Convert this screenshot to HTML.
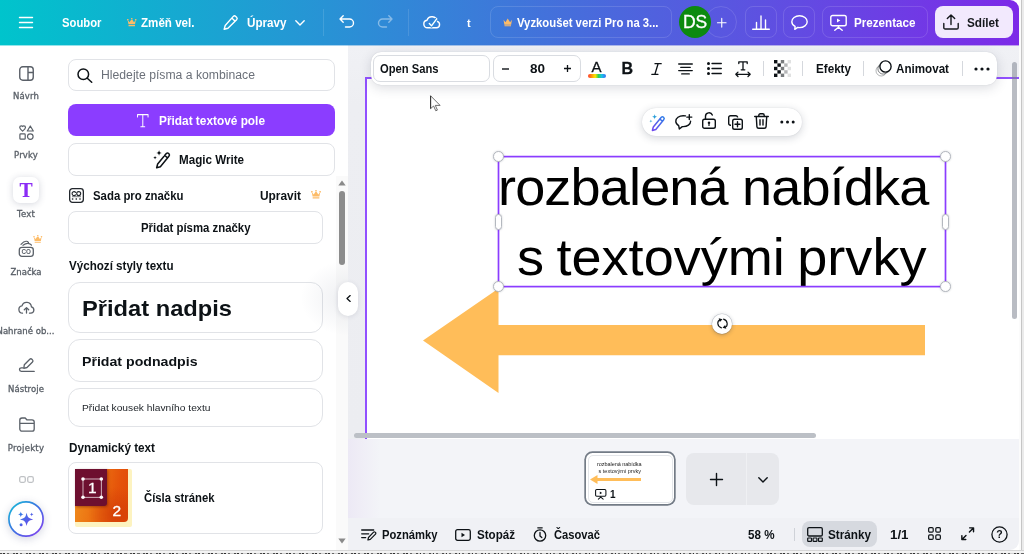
<!DOCTYPE html>
<html lang="cs">
<head>
<meta charset="utf-8">
<title>Canva</title>
<style>
*{box-sizing:border-box;margin:0;padding:0}
html,body{width:1024px;height:554px;overflow:hidden;background:#fff}
body{font-family:"Liberation Sans",sans-serif;color:#0d1216;position:relative}
.abs{position:absolute}
#win{will-change:transform;position:absolute;left:0;top:0;width:1019px;height:550px;overflow:hidden;border-radius:0 9px 9px 0;background:#fff}
#outer-r{position:absolute;left:1019px;top:0;width:5px;height:554px;background:linear-gradient(90deg,#fbfbfb 0,#fbfbfb 2.5px,#c6c6c6 2.5px,#c6c6c6 3.5px,#ebebeb 3.5px)}
#outer-r i{display:none}
#outer-b{position:absolute;left:0;top:550px;width:1024px;height:4px;background:linear-gradient(180deg,#d4d4d4 0,#d8d8d8 1.2px,#f3f3f3 1.2px,#f3f3f3 2.6px,rgba(243,243,243,0) 2.6px),repeating-linear-gradient(90deg,#4a4a4a 0,#4a4a4a 2px,#c8c8c8 2px,#c8c8c8 3.5px,#2e2e2e 3.5px,#2e2e2e 5px,#e2e2e2 5px,#e2e2e2 7px,#666 7px,#666 9.5px,#d0d0d0 9.5px,#d0d0d0 13px)}
/* header */
#hdr{position:absolute;left:0;top:0;width:1019px;height:45px;background:linear-gradient(90deg,#00c4cc 0%,#7d2ae8 100%)}
#hdr .t{position:absolute;color:#fff;font-weight:700;font-size:12px;line-height:16px;top:14.600px;white-space:nowrap}
#hdr .vd{position:absolute;top:9px;width:1px;height:27px;background:rgba(255,255,255,.12)}
#hdr .ob{position:absolute;top:6px;height:32px;border:1px solid rgba(255,255,255,.13);border-radius:8px}
/* rail */
#rail{position:absolute;left:0;top:45px;width:52px;height:505px;background:#fff;z-index:2}
#rail .lb{position:absolute;left:-10px;width:72px;text-align:center;font-family:'DejaVu Sans','Liberation Sans',sans-serif;font-size:8.5px;line-height:12px;color:#5a6068;font-weight:400;-webkit-text-stroke:.3px;white-space:nowrap}
#rail svg{position:absolute}
/* panel */
#panel{position:absolute;left:52px;top:45px;width:296px;height:505px;background:#fff}
.card{position:absolute;border:1px solid #e1e3e7;border-radius:8px;background:#fff}
.ptxt{position:absolute;white-space:nowrap;font-weight:700;color:#0d1216}
/* canvas */
#cv{position:absolute;left:348px;top:45px;width:671px;height:394px;background:linear-gradient(180deg,#f0f1f5 0,#edeef2 60px,#ecedf1 100%)}
#page{position:absolute;left:365px;top:77px;width:660px;height:362px;background:#fff;border-left:2px solid #9150ff;border-top:2px solid #9150ff}
#tray{position:absolute;left:348px;top:439px;width:671px;height:79px;background:linear-gradient(90deg,#ece9f5 0,#efedf6 12px,#f3f4f8 32px)}
#bbar{position:absolute;left:348px;top:518px;width:671px;height:32px;background:#f0f1f5}
#bbar .t{position:absolute;top:9.500px;font-size:12px;line-height:14px;font-weight:700;color:#0d1216;white-space:nowrap}
/* toolbar */
#tb{position:absolute;left:371px;top:52px;width:626px;height:32.500px;background:#fff;border-radius:10px;box-shadow:0 3px 12px rgba(40,50,70,.17),0 0 1px rgba(40,50,70,.2)}
#tb .t{position:absolute;top:9.800px;font-size:12px;line-height:15px;font-weight:700;color:#0d1216;white-space:nowrap}
#tb .vd{position:absolute;top:9px;width:1px;height:15px;background:#d5d8dd}
#mini{position:absolute;left:642px;top:107.700px;width:159.500px;height:28.500px;background:#fff;border-radius:14.250px;box-shadow:0 2px 9px rgba(40,50,70,.2),0 0 1px rgba(40,50,70,.2)}
svg{display:block;overflow:visible}
.ct{font-size:52px;line-height:60px;color:#000;white-space:nowrap}
.hc{position:absolute;width:11px;height:11px;border-radius:6px;background:#fff;border:1px solid #b4b8bf;box-shadow:0 0 2px rgba(40,50,70,.25)}
.hs{position:absolute;width:7px;height:16px;border-radius:3.500px;background:#fff;border:1px solid #b4b8bf;box-shadow:0 0 2px rgba(40,50,70,.25)}
</style>
</head>
<body>
<div id="win">
  <div id="hdr">
    <svg class="abs" style="left:19px;top:16px" width="14" height="13" viewBox="0 0 14 13"><path d="M.5 1.5h13M.5 6.5h13M.5 11.5h13" stroke="#fff" stroke-width="1.4" stroke-linecap="round" fill="none"/></svg>
    <span class="t" style="transform:scaleX(0.9405);transform-origin:0 50%;left:62px">Soubor</span>
    <svg class="abs" style="left:126.500px;top:17.800px" width="9.500" height="8.500" viewBox="0 0 18 16"><path d="M1.300 3.800l3.500 4.300L9 1.600l4.200 6.500 3.500-4.300-1.500 8.200H2.800zM2.900 13.400h12.200v2H2.900zM1.500 1.900a1.500 1.500 0 1 0 .01 0zM9 0a1.500 1.500 0 1 0 .01 0zM16.500 1.900a1.500 1.500 0 1 0 .01 0z" fill="#fdbc68"/></svg>
    <span class="t" style="transform:scaleX(0.9664);transform-origin:0 50%;left:141px">Změň vel.</span>
    <svg class="abs" style="left:223px;top:15px" width="15" height="15" viewBox="0 0 15 15"><path d="M10.300 1.400a1.700 1.700 0 0 1 2.400 0l.9.900a1.700 1.700 0 0 1 0 2.400L5 13.300l-3.800 1 1-3.800zM8.800 2.900l3.300 3.300" stroke="#fff" stroke-width="1.400" fill="none" stroke-linejoin="round" stroke-linecap="round"/></svg>
    <span class="t" style="transform:scaleX(0.9708);transform-origin:0 50%;left:247px">Úpravy</span>
    <svg class="abs" style="left:295px;top:20px" width="10" height="6" viewBox="0 0 10 6"><path d="M.8.800L5 5l4.200-4.200" stroke="#fff" stroke-width="1.400" fill="none" stroke-linecap="round" stroke-linejoin="round"/></svg>
    <i class="vd" style="left:323px"></i>
    <svg class="abs" style="left:339px;top:15px" width="16" height="13" viewBox="0 0 16 13"><path d="M4.200.8L1 4l3.200 3.200M1.200 4h9.300a4 4 0 0 1 0 8H6.500" stroke="#fff" stroke-width="1.400" fill="none" stroke-linecap="round" stroke-linejoin="round"/></svg>
    <svg class="abs" style="left:377px;top:15px;opacity:.42" width="16" height="13" viewBox="0 0 16 13"><path d="M11.800.8L15 4l-3.200 3.200M14.800 4H5.500a4 4 0 0 0 0 8h4" stroke="#fff" stroke-width="1.400" fill="none" stroke-linecap="round" stroke-linejoin="round"/></svg>
    <i class="vd" style="left:408px"></i>
    <svg class="abs" style="left:423px;top:15px" width="18" height="14" viewBox="0 0 18 14"><path d="M4.600 12.800a3.800 3.800 0 0 1-.6-7.550 5.200 5.200 0 0 1 10.100 1.150 3.250 3.250 0 0 1-.6 6.400z" stroke="#fff" stroke-width="1.400" fill="none" stroke-linejoin="round"/><path d="M6.300 8.600l2.200 2.200 5.200-7" stroke="#2f8bd9" stroke-width="3.600" fill="none" stroke-linecap="butt" stroke-linejoin="round"/><path d="M6.300 8.600l2.200 2.200 5.200-7" stroke="#fff" stroke-width="1.400" fill="none" stroke-linecap="round" stroke-linejoin="round"/></svg>
    <span class="t" style="left:467px;font-size:11px">t</span>
    <div class="ob" style="left:490px;width:182px"></div>
    <svg class="abs" style="left:502.500px;top:17.800px" width="9.500" height="8.500" viewBox="0 0 18 16"><path d="M1 3.200l3.600 5L9 1l4.400 7.200 3.600-5-1.600 9.300H2.600z M2.800 13.800h12.400v1.700H2.800z" fill="#fdbc68"/></svg>
    <span class="t" style="transform:scaleX(0.9416);transform-origin:0 50%;left:516.5px">Vyzkoušet verzi Pro na 3...</span>
    <div class="abs" style="left:705px;top:6px;width:32px;height:32px;border-radius:16px;border:1px solid rgba(255,255,255,.12)"></div>
    <svg class="abs" style="left:716.800px;top:17.500px" width="9.500" height="9.500" viewBox="0 0 11 11"><path d="M5.500.5v10M.5 5.500h10" stroke="#fff" stroke-width="1.300" stroke-linecap="round"/></svg>
    <div class="abs" style="left:679px;top:6px;width:32px;height:32px;border-radius:16px;background:#0c8a0f;color:#fff;font-size:17.500px;line-height:32px;text-align:center;letter-spacing:-.2px;-webkit-text-stroke:.3px">DS</div>
    <div class="ob" style="left:745px;width:32px"></div>
    <svg class="abs" style="left:752px;top:15px" width="18" height="15" viewBox="0 0 18 15"><path d="M.7 14.300h16.600M4.500 14V7.500M9 14V1M13.500 14V5" stroke="#fff" stroke-width="1.400" stroke-linecap="round" fill="none"/></svg>
    <div class="ob" style="left:783px;width:32px"></div>
    <svg class="abs" style="left:791px;top:15px" width="17" height="15" viewBox="0 0 17 15"><path d="M8.500.8c4.300 0 7.700 2.600 7.700 5.900s-3.400 5.900-7.700 5.900c-.6 0-1.200-.05-1.800-.15L3.800 14.300l.3-2.900C2.100 10.300.8 8.600.8 6.700.8 3.400 4.200.8 8.500.8z" stroke="#fff" stroke-width="1.400" fill="none" stroke-linejoin="round"/></svg>
    <div class="ob" style="left:822px;width:106px"></div>
    <svg class="abs" style="left:830px;top:14px" width="17" height="17" viewBox="0 0 17 17"><rect x=".8" y="1.500" width="15.400" height="10.200" rx="1.800" stroke="#fff" stroke-width="1.400" fill="none"/><path d="M7 4.600v4l3.300-2z" fill="#fff"/><path d="M8.500 11.800v1.400M4.800 16.300l3.700-3.100 3.700 3.100" stroke="#fff" stroke-width="1.400" fill="none" stroke-linecap="round" stroke-linejoin="round"/></svg>
    <span class="t" style="transform:scaleX(0.9704);transform-origin:0 50%;left:854px">Prezentace</span>
    <div class="abs" style="left:935px;top:6px;width:78px;height:32px;border-radius:8px;background:#f2e9fd"></div>
    <svg class="abs" style="left:943px;top:14px" width="16" height="16" viewBox="0 0 16 16"><path d="M.8 9.500v4.200a1.300 1.300 0 0 0 1.300 1.300h11.800a1.300 1.300 0 0 0 1.300-1.300V9.500M8 10.500V1.200M4.300 4.600L8 .9l3.700 3.700" stroke="#16191d" stroke-width="1.400" fill="none" stroke-linecap="round" stroke-linejoin="round"/></svg>
    <span class="t" style="transform:scaleX(0.9794);transform-origin:0 50%;left:967px;color:#16191d">Sdílet</span>
  </div>
  <div class="abs" style="left:0;top:45px;width:1019px;height:1px;background:linear-gradient(90deg,#00c4cc 0%,#7d2ae8 100%);opacity:.42;z-index:3"></div>
  <div id="rail">
    <svg style="left:18.500px;top:20.500px" width="15" height="15" viewBox="0 0 15 15"><rect x=".75" y=".75" width="13.500" height="13.500" rx="3" stroke="#5a6068" stroke-width="1.400" fill="none"/><path d="M9 .8v13.400M9 6.500h5.200" stroke="#5a6068" stroke-width="1.400" fill="none"/></svg>
    <span class="lb" style="letter-spacing:0.131px;top:45px">Návrh</span>
    <svg style="left:18.500px;top:79.500px" width="15" height="15" viewBox="0 0 15 15"><path d="M3.600 6.200C2.300 5.200.7 4 .7 2.600.7 1.600 1.500.8 2.400.8c.5 0 1 .3 1.200.7.200-.4.700-.7 1.200-.7.900 0 1.700.8 1.700 1.800 0 1.400-1.600 2.600-2.900 3.600z" stroke="#5a6068" stroke-width="1.200" fill="none" stroke-linejoin="round"/><path d="M11.300 1l3 5h-6z" stroke="#5a6068" stroke-width="1.200" fill="none" stroke-linejoin="round"/><rect x=".9" y="8.900" width="5.300" height="5.300" rx=".8" stroke="#5a6068" stroke-width="1.200" fill="none"/><circle cx="11.300" cy="11.600" r="2.800" stroke="#5a6068" stroke-width="1.200" fill="none"/></svg>
    <span class="lb" style="letter-spacing:0.169px;top:104px">Prvky</span>
    <div class="abs" style="left:13px;top:132px;width:26px;height:26px;border-radius:7px;background:#fff;box-shadow:0 1px 7px rgba(60,70,100,.22)"></div>
    <span class="abs" style="left:13px;top:134.800px;width:26px;text-align:center;font-family:'DejaVu Serif','Liberation Serif',serif;font-weight:700;font-size:17.600px;line-height:22px;color:#8b2cf5">T</span>
    <span class="lb" style="letter-spacing:0.199px;top:162.500px">Text</span>
    <svg style="left:18px;top:195px" width="16.500" height="17" viewBox="0 0 16.500 17"><rect x="1.300" y="7.300" width="14" height="9" rx="2.600" stroke="#5a6068" stroke-width="1.300" fill="none"/><path d="M3 4.400C4.600 2.600 6.600 1.100 8.300 1.300 9.300 1.400 10 1.800 10.500 2.300M5 5.300C7 3.800 9.500 3.200 11 3.600 12.200 3.900 13 4.500 13.500 5.200" stroke="#5a6068" stroke-width="1.150" fill="none" stroke-linecap="round"/><text x="8.150" y="14" text-anchor="middle" font-family="Liberation Sans" font-weight="700" font-size="6.300" fill="#5a6068">CO</text></svg>
    <svg style="left:33px;top:190px" width="9.500" height="8" viewBox="0 0 18 16"><path d="M1.300 3.800l3.500 4.300L9 1.600l4.200 6.500 3.500-4.300-1.500 8.200H2.800zM2.900 13.400h12.200v2H2.900zM1.500 1.900a1.500 1.500 0 1 0 .01 0zM9 0a1.500 1.500 0 1 0 .01 0zM16.500 1.900a1.500 1.500 0 1 0 .01 0z" fill="#fdbc68"/></svg>
    <span class="lb" style="letter-spacing:-0.013px;top:221px">Značka</span>
    <svg style="left:18px;top:254.500px" width="17" height="14" viewBox="0 0 17 14"><path d="M4.500 13.200a3.700 3.700 0 0 1-.5-7.350 4.800 4.800 0 0 1 9.400.95 3.250 3.250 0 0 1-.6 6.400h-1.300" stroke="#5a6068" stroke-width="1.300" fill="none" stroke-linejoin="round" stroke-linecap="round"/><path d="M8.500 13V7.800M6.300 9.800l2.200-2.200 2.200 2.200" stroke="#5a6068" stroke-width="1.300" fill="none" stroke-linecap="round" stroke-linejoin="round"/></svg>
    <span class="lb" style="letter-spacing:0.024px;top:279.500px;left:-3.500px;width:auto;text-align:left">Nahrané ob...</span>
    <svg style="left:18.500px;top:313px" width="16" height="15" viewBox="0 0 16 15"><path d="M10.800 1.300a1.500 1.500 0 0 1 2.100 0l.6.600a1.500 1.500 0 0 1 0 2.100L8 9.500l-3.200.9.500-3.600z" stroke="#5a6068" stroke-width="1.300" fill="none" stroke-linejoin="round"/><path d="M4.200 9.800H2.300a1.700 1.700 0 0 0 0 3.600h12.900" stroke="#5a6068" stroke-width="1.300" fill="none" stroke-linecap="round"/></svg>
    <span class="lb" style="letter-spacing:0.07px;top:338px">Nástroje</span>
    <svg style="left:18.500px;top:372px" width="16" height="15" viewBox="0 0 16 15"><path d="M.8 3.200A2.200 2.200 0 0 1 3 1h3.200l1.600 1.800H13A2.200 2.200 0 0 1 15.200 5v7a2.200 2.200 0 0 1-2.200 2.200H3A2.200 2.200 0 0 1 .8 12zM.8 6.300h14.400" stroke="#5a6068" stroke-width="1.300" fill="none" stroke-linejoin="round"/></svg>
    <span class="lb" style="letter-spacing:0.266px;top:396.500px">Projekty</span>
    <svg style="left:19px;top:431px;opacity:.38" width="15" height="7" viewBox="0 0 15 7"><rect x=".7" y=".7" width="5.600" height="5.600" rx="1.500" stroke="#5a6068" stroke-width="1.300" fill="none"/><rect x="8.700" y=".7" width="5.600" height="5.600" rx="1.500" stroke="#5a6068" stroke-width="1.300" fill="none"/></svg>
    <div class="abs" style="left:8px;top:456px;width:36px;height:36px;border-radius:18px;background:#fff;box-shadow:0 2px 8px rgba(60,70,120,.22)"></div><svg style="left:8px;top:456px" width="36" height="36" viewBox="0 0 36 36"><defs><linearGradient id="rg" x1="0" y1="0" x2="1" y2="1"><stop offset="0" stop-color="#14c0d6"/><stop offset=".5" stop-color="#3d6fe2"/><stop offset="1" stop-color="#8a3df0"/></linearGradient><linearGradient id="mg" x1="0" y1="0" x2="1" y2="1"><stop offset="0" stop-color="#2f86e6"/><stop offset="1" stop-color="#6f42ea"/></linearGradient></defs><circle cx="18" cy="18" r="17.100" stroke="url(#rg)" stroke-width="1.700" fill="#fff"/><path d="M18.6 11.80C19.71 16.55 20.45 17.29 25.20 18.4C20.45 19.51 19.71 20.25 18.6 25.00C17.49 20.25 16.75 19.51 12.00 18.4C16.75 17.29 17.49 16.55 18.6 11.80zM12.8 10.60C13.27 12.62 13.58 12.93 15.60 13.4C13.58 13.87 13.27 14.18 12.8 16.20C12.33 14.18 12.02 13.87 10.00 13.4C12.02 12.93 12.33 12.62 12.8 10.60zM23.7 11.60C24.02 12.97 24.23 13.18 25.60 13.5C24.23 13.82 24.02 14.03 23.7 15.40C23.38 14.03 23.17 13.82 21.80 13.5C23.17 13.18 23.38 12.97 23.7 11.60z" fill="url(#mg)"/><circle cx="13.100" cy="23.700" r="1.500" fill="url(#mg)"/></svg>
  </div>
  <div id="panel">
    <div class="abs" style="left:284px;top:130.500px;width:12px;height:374px;background:#fafafa"></div>
    <div class="card" style="left:16px;top:14px;width:267px;height:32px"></div>
    <svg class="abs" style="left:25px;top:23px" width="16" height="15" viewBox="0 0 16 15"><circle cx="6.300" cy="6.300" r="5.300" stroke="#0d1216" stroke-width="1.500" fill="none"/><path d="M10.300 10.300l4.400 4" stroke="#0d1216" stroke-width="1.500" stroke-linecap="round"/></svg>
    <span class="ptxt" style="transform:scaleX(1.017);transform-origin:0 50%;left:49px;top:22px;font-size:12px;line-height:16px;font-weight:400;color:#6b7079">Hledejte písma a kombinace</span>
    <div class="abs" style="left:16px;top:59px;width:267px;height:32px;border-radius:8px;background:#8b3dff"></div>
    <svg class="abs" style="left:84.700px;top:68.600px" width="11.600" height="13.400" viewBox="0 0 13 13" preserveAspectRatio="none"><path d="M.6 2.800V.6h11.800v2.200M6.500.6v11.800M4.300 12.400h4.400" stroke="#fff" stroke-width="1.100" fill="none" stroke-linecap="round" stroke-linejoin="round"/></svg>
    <span class="ptxt" style="transform:scaleX(0.9872);transform-origin:0 50%;left:106.500px;top:68px;font-size:12px;line-height:16px;color:#fff">Přidat textové pole</span>
    <div class="card" style="left:16px;top:98px;width:267px;height:32.500px"></div>
    <svg class="abs" style="left:101.300px;top:105.300px" width="18.400" height="18.400" viewBox="0 0 17 17"><path d="M12.300 3.300a1.600 1.600 0 0 1 2.200 0l.2.200a1.600 1.600 0 0 1 0 2.200L6.800 15.500l-3.400.9.900-3.400zM10.800 4.800l2.400 2.400" stroke="#0d1216" stroke-width="1.400" fill="none" stroke-linejoin="round" stroke-linecap="round"/><path d="M5.600 0c.2 1.800.9 2.500 2.700 2.700-1.800.2-2.500.9-2.700 2.700-.2-1.800-.9-2.500-2.700-2.700C4.700 2.500 5.400 1.800 5.600 0zM1.900 5.400c.13 1.100.6 1.570 1.700 1.700-1.100.13-1.570.6-1.700 1.700-.13-1.100-.6-1.570-1.700-1.700 1.100-.13 1.570-.6 1.700-1.700z" fill="#0d1216"/></svg>
    <span class="ptxt" style="transform:scaleX(0.9683);transform-origin:0 50%;left:127px;top:107px;font-size:12px;line-height:16px">Magic Write</span>
    <svg class="abs" style="left:17px;top:142.800px" width="15" height="15" viewBox="0 0 15 15"><rect x=".65" y=".65" width="13.700" height="13.700" rx="2.800" stroke="#22272c" stroke-width="1.300" fill="none"/><path d="M6.600 4.300A2 2 0 1 0 6.600 6.900" stroke="#22272c" stroke-width="1.100" fill="none" stroke-linecap="round"/><circle cx="9.700" cy="5.600" r="2" stroke="#22272c" stroke-width="1.100" fill="none"/><path d="M3 8.700h9" stroke="#22272c" stroke-width=".6"/><rect x="2.900" y="10.300" width="1.400" height="1.400" fill="#22272c"/><rect x="6.600" y="10.300" width="1.400" height="1.400" fill="#22272c"/><rect x="10.300" y="10.300" width="1.400" height="1.400" fill="#22272c"/></svg>
    <span class="ptxt" style="transform:scaleX(0.9489);transform-origin:0 50%;left:40.500px;top:142.500px;font-size:12px;line-height:16px">Sada pro značku</span>
    <span class="ptxt" style="transform:scaleX(0.9917);transform-origin:0 50%;left:208px;top:142.500px;font-size:12px;line-height:16px">Upravit</span>
    <svg class="abs" style="left:259.300px;top:145.300px" width="10" height="8.800" viewBox="0 0 18 16"><path d="M1.300 3.800l3.500 4.300L9 1.600l4.200 6.500 3.500-4.300-1.500 8.200H2.800zM2.900 13.400h12.200v2H2.900zM1.500 1.900a1.500 1.500 0 1 0 .01 0zM9 0a1.500 1.500 0 1 0 .01 0zM16.500 1.900a1.500 1.500 0 1 0 .01 0z" fill="#fdbc68"/></svg>
    <div class="card" style="left:16px;top:166px;width:255px;height:33px"></div>
    <span class="ptxt" style="transform:scaleX(0.949);transform-origin:0 50%;left:89px;top:174.500px;font-size:12px;line-height:16px">Přidat písma značky</span>
    <span class="ptxt" style="transform:scaleX(0.9672);transform-origin:0 50%;left:16.500px;top:213px;font-size:12px;line-height:16px">Výchozí styly textu</span>
    <div class="card" style="left:16px;top:236.500px;width:255px;height:51.500px;border-radius:12px"></div>
    <span class="ptxt" style="transform:scaleX(1.0437);transform-origin:0 50%;left:30px;top:248.500px;font-size:22.700px;line-height:28px;font-weight:700">Přidat nadpis</span>
    <div class="card" style="left:16px;top:294px;width:255px;height:43px;border-radius:12px"></div>
    <span class="ptxt" style="transform:scaleX(1.0879);transform-origin:0 50%;left:30px;top:307.500px;font-size:13px;line-height:18px;font-weight:700">Přidat podnadpis</span>
    <div class="card" style="left:16px;top:343px;width:255px;height:38.500px;border-radius:12px"></div>
    <span class="ptxt" style="transform:scaleX(1.1002);transform-origin:0 50%;left:29.500px;top:356.500px;font-size:9.300px;line-height:13px;font-weight:400;color:#22272c">Přidat kousek hlavního textu</span>
    <span class="ptxt" style="transform:scaleX(0.9768);transform-origin:0 50%;left:16.500px;top:394.500px;font-size:12px;line-height:16px">Dynamický text</span>
    <div class="card" style="left:16px;top:417px;width:255px;height:71.500px"></div>
    <div class="abs" style="left:22.500px;top:423.500px;width:57.500px;height:58.500px;background:#fdf3c0;border-radius:2px"></div>
    <div class="abs" style="left:22.500px;top:423.500px;width:53.500px;height:53.500px;border-radius:0 0 4px 0;background:radial-gradient(circle at 75% 85%,rgba(200,50,5,.55) 0%,rgba(200,50,5,0) 45%),linear-gradient(100deg,#f0901e 0%,#ec7212 40%,#e5530a 75%,#e04a08 100%)"></div>
    <div class="abs" style="left:22.500px;top:423.500px;width:32px;height:37.500px;border-radius:0 0 3px 0;background:#6d0f2f;box-shadow:1px 1px 3px rgba(60,0,0,.4)"></div>
    <svg class="abs" style="left:29px;top:432px" width="22" height="22" viewBox="0 0 22 22"><rect x="2" y="2" width="18.300" height="18.300" stroke="#fff" stroke-width=".8" fill="none" opacity=".85"/><circle cx="2" cy="2" r="1.800" fill="#fff"/><circle cx="20.300" cy="2" r="1.800" fill="#fff"/><circle cx="2" cy="20.300" r="1.800" fill="#fff"/><circle cx="20.300" cy="20.300" r="1.800" fill="#fff"/><text x="11.300" y="16.800" text-anchor="middle" font-family="Liberation Sans" font-size="15.500" dy="-.8" fill="#fff" stroke="#fff" stroke-width=".3">1</text></svg>
    <span class="abs" style="left:60.500px;top:456.500px;font-size:15.500px;line-height:18px;color:#fff;-webkit-text-stroke:.35px">2</span>
    <span class="ptxt" style="transform:scaleX(0.9435);transform-origin:0 50%;left:91.500px;top:445px;font-size:12px;line-height:16px">Čísla stránek</span>
    <svg class="abs" style="left:286px;top:135px" width="8" height="6" viewBox="0 0 8 6"><path d="M4 .5l3.700 5H.3z" fill="#8a8a8a"/></svg>
    <div class="abs" style="left:286.500px;top:146px;width:6.500px;height:74px;border-radius:3.500px;background:#8c8c8c"></div>
    <svg class="abs" style="left:286px;top:493px" width="8" height="6" viewBox="0 0 8 6"><path d="M4 5.500L.3.500h7.400z" fill="#8a8a8a"/></svg>
  </div>
  <div id="cv"></div>
  <div id="page"></div>
  <svg class="abs" style="left:423px;top:288px" width="503" height="106" viewBox="0 0 503 106"><path d="M0 52.500L75.500.5V37H502v30.300H75.500V105z" fill="#ffbd59"/></svg>
  <span class="abs ct" style="letter-spacing:-.826px;left:497.700px;top:157px;transform:scaleX(1.04);transform-origin:0 50%">rozbalená nabídka</span>
  <span class="abs ct" style="letter-spacing:.0px;left:516.600px;top:227px;word-spacing:-2.500px;transform:scaleX(1.04);transform-origin:0 50%">s textovými prvky</span>
  <svg class="abs" style="left:490px;top:150px" width="470" height="145" viewBox="0 0 470 145"><rect x="8.500" y="6.600" width="447" height="130" stroke="#8b3dff" stroke-width="1.700" fill="none"/></svg>
  <i class="hc" style="left:492.500px;top:150.500px"></i><i class="hc" style="left:939.500px;top:150.500px"></i><i class="hc" style="left:492.500px;top:281px"></i><i class="hc" style="left:939.500px;top:281px"></i>
  <i class="hs" style="left:495px;top:213.500px"></i><i class="hs" style="left:942px;top:213.500px"></i>
  <div class="abs" style="left:711.700px;top:313.600px;width:20.500px;height:20.500px;border-radius:10.250px;background:#fff;box-shadow:0 0 0 .5px rgba(60,70,90,.25),0 1px 4px rgba(40,50,70,.3)"></div>
  <svg class="abs" style="left:716.500px;top:318.300px" width="11" height="11" viewBox="0 0 11 11"><path d="M4.400 9.900C-.2 8.300-.2 2.700 3.300 1.700M6.600 1.100C11.200 2.700 11.200 8.300 7.700 9.300" stroke="#0d1216" stroke-width="1.150" fill="none" stroke-linecap="round"/><path d="M1.700.2l3.800 1.100-2.600 2.700zM9.300 10.800l-3.800-1.100 2.600-2.700z" fill="#0d1216"/></svg>
  <svg class="abs" style="left:429.500px;top:94.500px" width="12" height="17" viewBox="0 0 12 17"><path d="M.6.800V13.600L3.600 11l2.200 4.800 1.600-.7-2.100-4.700h4.800z" fill="#fff" stroke="#4a4a4a" stroke-width=".8" stroke-linejoin="round"/><path d="M.6.800V13.600" stroke="#333" stroke-width="1"/></svg>
  <div class="abs" style="left:1012.200px;top:62px;width:4.800px;height:257px;border-radius:2.500px;background:rgba(120,126,140,.52)"></div>
  <div class="abs" style="left:353.500px;top:433px;width:462.500px;height:5px;border-radius:2.500px;background:#bcc0c6"></div>
  <div id="tray">
    <div class="abs" style="left:237.700px;top:13.700px;width:88.600px;height:51.300px;box-shadow:0 0 0 1.700px #737b86;border-radius:6.500px;background:#fff"></div>
    <div class="abs" style="left:239.500px;top:16px;width:85px;height:47.500px;border:1px solid #e4e6ea;border-radius:5px"></div>
    <span class="abs" style="letter-spacing:-0.045px;left:249px;top:21.500px;font-size:5.500px;line-height:7px;color:#222;white-space:nowrap">rozbalená nabídka</span>
    <span class="abs" style="letter-spacing:0.018px;left:250.500px;top:28.500px;font-size:5.500px;line-height:7px;color:#222;white-space:nowrap">s textovými prvky</span>
    <svg class="abs" style="left:242px;top:36px" width="51" height="9" viewBox="0 0 51 9"><path d="M0 4.500L7.500 0v3H51v3H7.500v3z" fill="#ffbd59"/></svg>
    <svg class="abs" style="left:247px;top:49.500px" width="11.500" height="10.500" viewBox="0 0 12 11"><rect x=".6" y=".6" width="10.800" height="7" rx="1.200" stroke="#0d1216" stroke-width="1.100" fill="none"/><path d="M5 2.600v3l2.500-1.500z" fill="#0d1216"/><path d="M6 7.800v.9M3.500 10.600L6 8.500l2.500 2.100" stroke="#0d1216" stroke-width="1.100" fill="none" stroke-linecap="round" stroke-linejoin="round"/></svg>
    <span class="abs" style="left:262px;top:50px;font-size:10px;line-height:12px;font-weight:700;color:#0d1216">1</span>
    <div class="abs" style="left:338px;top:13.500px;width:93px;height:52px;border-radius:8px;background:#e7e8ec"></div>
    <div class="abs" style="left:397.500px;top:13.500px;width:1px;height:52px;background:#eff0f3"></div>
    <svg class="abs" style="left:361.500px;top:33.500px" width="13" height="13" viewBox="0 0 13 13"><path d="M6.500.5v12M.5 6.500h12" stroke="#0d1216" stroke-width="1.400" stroke-linecap="round"/></svg>
    <svg class="abs" style="left:410px;top:37.500px" width="10" height="6" viewBox="0 0 10 6"><path d="M.8.800L5 5l4.200-4.200" stroke="#0d1216" stroke-width="1.400" fill="none" stroke-linecap="round" stroke-linejoin="round"/></svg>
  </div>
  <div id="bbar">
    <svg class="abs" style="left:13px;top:10.500px" width="16" height="12" viewBox="0 0 16 12"><path d="M.7 1h12M.7 4.800h7M.7 8.600h4" stroke="#0d1216" stroke-width="1.300" stroke-linecap="round" fill="none"/><path d="M12.600 3.200a1.100 1.100 0 0 1 1.600 0l.3.300a1.100 1.100 0 0 1 0 1.600L9.300 10.300l-2.400.7.600-2.500z" stroke="#0d1216" stroke-width="1.200" fill="none" stroke-linejoin="round"/></svg>
    <span class="t" style="transform:scaleX(0.935);transform-origin:0 50%;left:33.500px">Poznámky</span>
    <svg class="abs" style="left:107px;top:10.500px" width="16" height="12" viewBox="0 0 16 12"><rect x=".7" y=".7" width="14.600" height="10.600" rx="1.800" stroke="#0d1216" stroke-width="1.300" fill="none"/><path d="M6.500 3.800v4.400L10 6z" fill="#0d1216"/></svg>
    <span class="t" style="transform:scaleX(0.9658);transform-origin:0 50%;left:128.500px">Stopáž</span>
    <svg class="abs" style="left:185px;top:9px" width="14" height="15" viewBox="0 0 14 15"><circle cx="7" cy="8.500" r="5.700" stroke="#0d1216" stroke-width="1.300" fill="none"/><path d="M4.800.8h4.400M7 5.500V9l1.800 1.600" stroke="#0d1216" stroke-width="1.300" stroke-linecap="round" stroke-linejoin="round" fill="none"/></svg>
    <span class="t" style="transform:scaleX(0.9316);transform-origin:0 50%;left:205.500px">Časovač</span>
    <span class="t" style="transform:scaleX(0.9686);transform-origin:0 50%;left:399.500px">58 %</span>
    <div class="abs" style="left:445.500px;top:10px;width:1px;height:12.500px;background:#cfd2d8"></div>
    <div class="abs" style="left:453.500px;top:3px;width:75px;height:25.500px;border-radius:8px;background:#d6d9df"></div>
    <svg class="abs" style="left:458.500px;top:9px" width="16" height="15" viewBox="0 0 16 15"><rect x=".7" y=".7" width="14.600" height="8.300" rx="1.300" stroke="#0d1216" stroke-width="1.300" fill="none"/><rect x=".7" y="11" width="3.800" height="3.300" rx=".6" stroke="#0d1216" stroke-width="1.200" fill="none"/><rect x="6.100" y="11" width="3.800" height="3.300" rx=".6" stroke="#0d1216" stroke-width="1.200" fill="none"/><rect x="11.500" y="11" width="3.800" height="3.300" rx=".6" stroke="#0d1216" stroke-width="1.200" fill="none"/></svg>
    <span class="t" style="transform:scaleX(0.9766);transform-origin:0 50%;left:479.500px">Stránky</span>
    <span class="t" style="transform:scaleX(1.1086);transform-origin:0 50%;left:541.500px">1/1</span>
    <svg class="abs" style="left:580px;top:9.300px" width="13" height="13" viewBox="0 0 14 14"><rect x=".7" y=".7" width="4.900" height="4.900" rx="1.200" stroke="#0d1216" stroke-width="1.300" fill="none"/><rect x="8.400" y=".7" width="4.900" height="4.900" rx="1.200" stroke="#0d1216" stroke-width="1.300" fill="none"/><rect x=".7" y="8.400" width="4.900" height="4.900" rx="1.200" stroke="#0d1216" stroke-width="1.300" fill="none"/><rect x="8.400" y="8.400" width="4.900" height="4.900" rx="1.200" stroke="#0d1216" stroke-width="1.300" fill="none"/></svg>
    <svg class="abs" style="left:612.500px;top:9.300px" width="13.400" height="13.400" viewBox="0 0 14 14"><path d="M8.800 5.200L13 1M9 .9h4.100V5M5.200 8.800L1 13M5 13.100H.9V9" stroke="#0d1216" stroke-width="1.500" fill="none" stroke-linecap="round" stroke-linejoin="round"/></svg>
    <svg class="abs" style="left:643px;top:7.500px" width="17" height="17" viewBox="0 0 17 17"><circle cx="8.500" cy="8.500" r="7.600" stroke="#0d1216" stroke-width="1.300" fill="none"/><text x="8.500" y="12.300" text-anchor="middle" font-family="Liberation Sans" font-weight="700" font-size="10.500" fill="#0d1216">?</text></svg>
  </div>
  <div class="abs" style="left:300px;top:260px;width:48px;height:76px;background:radial-gradient(ellipse at 100% 50%,rgba(80,90,120,.10) 0%,rgba(80,90,120,0) 70%)"></div>
  <div class="abs" style="left:337.500px;top:281.500px;width:20.500px;height:34px;border-radius:10.250px;background:#fff;box-shadow:0 1px 5px rgba(50,60,90,.12)"></div>
  <svg class="abs" style="left:345.500px;top:295px" width="5" height="7" viewBox="0 0 5 7"><path d="M4.200.6L1 3.500l3.200 2.900" stroke="#0d1216" stroke-width="1.300" fill="none" stroke-linecap="round" stroke-linejoin="round"/></svg>
  <div id="tb">
    <div class="abs" style="left:2px;top:3px;width:116.500px;height:26.500px;border:1px solid #d9dce1;border-radius:7px"></div>
    <span class="t" style="transform:scaleX(0.9332);transform-origin:0 50%;left:9px">Open Sans</span>
    <div class="abs" style="left:121.500px;top:3px;width:88px;height:26.500px;border:1px solid #d9dce1;border-radius:7px"></div>
    <svg class="abs" style="left:131px;top:16px" width="7" height="2" viewBox="0 0 7 2"><path d="M0 1h7" stroke="#0d1216" stroke-width="1.400"/></svg>
    <span class="t" style="transform:scaleX(1.1228);transform-origin:0 50%;left:158.500px">80</span>
    <svg class="abs" style="left:193px;top:13px" width="7" height="7" viewBox="0 0 7 7"><path d="M0 3.500h7M3.500 0v7" stroke="#0d1216" stroke-width="1.300"/></svg>
    <span class="abs" style="left:220.500px;top:6px;font-size:15px;line-height:18px;color:#0d1216;-webkit-text-stroke:.3px">A</span>
    <div class="abs" style="left:217px;top:22px;width:18px;height:3.500px;border-radius:2px;background:linear-gradient(90deg,#ff3b30 0%,#ff9f0a 22%,#ffe600 40%,#30d158 58%,#19c3e6 76%,#3b6cf6 100%)"></div>
    <span class="abs" style="left:250.500px;top:7.500px;font-size:16px;line-height:18px;font-weight:700;color:#0d1216;-webkit-text-stroke:.3px">B</span>
    <svg class="abs" style="left:280px;top:10.500px" width="11" height="12" viewBox="0 0 11 12"><path d="M4 .7h6.200M.8 11.300H7M7.100.7L3.900 11.300" stroke="#0d1216" stroke-width="1.300" stroke-linecap="round" fill="none"/></svg>
    <svg class="abs" style="left:306.500px;top:10.500px" width="15" height="12" viewBox="0 0 15 12"><path d="M.7 1h13.600M2.700 4.300h9.600M.7 7.600h13.600M3.700 10.900h7.600" stroke="#0d1216" stroke-width="1.300" stroke-linecap="round" fill="none"/></svg>
    <svg class="abs" style="left:336px;top:10px" width="15" height="13" viewBox="0 0 15 13"><circle cx="1.500" cy="1.500" r="1.500" fill="#0d1216"/><circle cx="1.500" cy="6.500" r="1.500" fill="#0d1216"/><circle cx="1.500" cy="11.500" r="1.500" fill="#0d1216"/><path d="M5 1.500h9.300M5 6.500h9.300M5 11.500h9.300" stroke="#0d1216" stroke-width="1.300" stroke-linecap="round" fill="none"/></svg>
    <svg class="abs" style="left:364px;top:9px" width="16" height="16" viewBox="0 0 16 16"><path d="M3.800 2.600V.8h8.400v1.800M8 .8v8M6.200 8.800h3.600" stroke="#0d1216" stroke-width="1.300" stroke-linecap="round" stroke-linejoin="round" fill="none"/><path d="M.8 13.300h14.400M3 11.100L.8 13.300 3 15.500M13 11.100l2.200 2.200-2.200 2.200" stroke="#0d1216" stroke-width="1.300" stroke-linecap="round" stroke-linejoin="round" fill="none"/></svg>
    <i class="vd" style="left:391.500px"></i>
    <svg class="abs" style="left:403px;top:8px" width="17" height="17" viewBox="0 0 16 16"><g fill="#0d1216"><rect x="0" y="0" width="3.200" height="3.200"/><rect x="0" y="6.400" width="3.200" height="3.200"/><rect x="0" y="12.800" width="3.200" height="3.200"/><rect x="3.200" y="3.200" width="3.200" height="3.200"/><rect x="3.200" y="9.600" width="3.200" height="3.200"/></g><g fill="#0d1216" opacity=".55"><rect x="6.400" y="0" width="3.200" height="3.200"/><rect x="6.400" y="6.400" width="3.200" height="3.200"/><rect x="6.400" y="12.800" width="3.200" height="3.200"/></g><g fill="#0d1216" opacity=".3"><rect x="9.600" y="3.200" width="3.200" height="3.200"/><rect x="9.600" y="9.600" width="3.200" height="3.200"/></g><g fill="#0d1216" opacity=".12"><rect x="12.800" y="0" width="3.200" height="3.200"/><rect x="12.800" y="6.400" width="3.200" height="3.200"/><rect x="12.800" y="12.800" width="3.200" height="3.200"/></g></svg>
    <i class="vd" style="left:431px"></i>
    <span class="t" style="transform:scaleX(0.9714);transform-origin:0 50%;left:444.500px">Efekty</span>
    <i class="vd" style="left:491.500px"></i>
    <svg class="abs" style="left:503.500px;top:8px" width="17" height="17" viewBox="0 0 17 17"><circle cx="6.300" cy="10.700" r="5.300" stroke="#0d1216" stroke-width=".9" fill="none" opacity=".35"/><circle cx="8.200" cy="8.800" r="5.300" stroke="#0d1216" stroke-width=".9" fill="#fff" opacity=".6"/><circle cx="10.500" cy="6.500" r="5.600" stroke="#0d1216" stroke-width="1.400" fill="#fff"/></svg>
    <span class="t" style="transform:scaleX(0.9691);transform-origin:0 50%;left:525px">Animovat</span>
    <i class="vd" style="left:591px"></i>
    <svg class="abs" style="left:602.500px;top:15px" width="16" height="4" viewBox="0 0 16 4"><circle cx="2" cy="2" r="1.600" fill="#0d1216"/><circle cx="8" cy="2" r="1.600" fill="#0d1216"/><circle cx="14" cy="2" r="1.600" fill="#0d1216"/></svg>
  </div>
  <div id="mini">
    <svg class="abs" style="left:6.500px;top:6px" width="17" height="17" viewBox="0 0 17 17"><defs><linearGradient id="pg" x1="0" y1="1" x2="1" y2="0"><stop offset="0" stop-color="#7046ee"/><stop offset="1" stop-color="#2f7fe8"/></linearGradient></defs><path d="M12.300 3.300a1.600 1.600 0 0 1 2.200 0l.2.200a1.600 1.600 0 0 1 0 2.200L6.800 15.500l-3.400.9.900-3.400zM10.800 4.800l2.400 2.400" stroke="url(#pg)" stroke-width="1.500" fill="none" stroke-linejoin="round" stroke-linecap="round"/><path d="M5.600 0c.2 1.800.9 2.500 2.700 2.700-1.800.2-2.500.9-2.700 2.700-.2-1.800-.9-2.500-2.700-2.700C4.700 2.500 5.400 1.800 5.600 0zM1.900 5.400c.13 1.100.6 1.570 1.700 1.700-1.100.13-1.570.6-1.700 1.700-.13-1.100-.6-1.570-1.700-1.700 1.100-.13 1.570-.6 1.700-1.700z" fill="#2b9fd9"/></svg>
    <svg class="abs" style="left:32.500px;top:6px" width="18" height="17" viewBox="0 0 18 17"><path d="M10.500 1.900C9.800 1.750 9 1.700 8.200 1.700 4.100 1.700.8 4.100.8 7.200c0 1.800 1.100 3.400 2.900 4.400l.6 3.400 3-2.400c.3 0 .6.050.9.050 4.100 0 7.400-2.400 7.400-5.450" stroke="#0d1216" stroke-width="1.400" fill="none" stroke-linejoin="round" stroke-linecap="round"/><path d="M14.300.6v5M11.800 3.100h5" stroke="#0d1216" stroke-width="1.400" stroke-linecap="round"/></svg>
    <svg class="abs" style="left:59.500px;top:4.500px" width="14" height="17" viewBox="0 0 14 17"><rect x=".7" y="7.300" width="12.600" height="9" rx="1.800" stroke="#0d1216" stroke-width="1.400" fill="none"/><path d="M3.500 7.200V4.300a3.500 3.500 0 0 1 6.800-1.200" stroke="#0d1216" stroke-width="1.400" fill="none" stroke-linecap="round"/><path d="M7 9.500a1.300 1.300 0 0 1 .6 2.450V14H6.400v-2.050A1.300 1.300 0 0 1 7 9.500z" fill="#0d1216"/></svg>
    <svg class="abs" style="left:85.500px;top:7px" width="15" height="15" viewBox="0 0 15 15"><rect x="4.700" y="4.200" width="9.600" height="10.100" rx="1.800" stroke="#0d1216" stroke-width="1.400" fill="#fff"/><path d="M3 10.300h-.5A1.800 1.800 0 0 1 .7 8.500v-6A1.800 1.800 0 0 1 2.500.7h5.300a1.800 1.800 0 0 1 1.800 1.800" stroke="#0d1216" stroke-width="1.400" fill="none"/><path d="M9.500 6.800v5M7 9.300h5" stroke="#0d1216" stroke-width="1.400" stroke-linecap="round"/></svg>
    <svg class="abs" style="left:111.500px;top:5.500px" width="15" height="16" viewBox="0 0 15 16"><path d="M.7 3.500h13.600M4.800 3.300V2.200A1.500 1.500 0 0 1 6.300.7h2.400a1.500 1.500 0 0 1 1.500 1.500v1.100M2.300 3.700l.6 9.900a1.800 1.800 0 0 0 1.800 1.700h5.600a1.800 1.800 0 0 0 1.800-1.700l.6-9.900M6 6.800v5.200M9 6.800v5.200" stroke="#0d1216" stroke-width="1.400" fill="none" stroke-linecap="round" stroke-linejoin="round"/></svg>
    <svg class="abs" style="left:137.500px;top:12.500px" width="15" height="4" viewBox="0 0 15 4"><circle cx="1.800" cy="2" r="1.500" fill="#0d1216"/><circle cx="7.500" cy="2" r="1.500" fill="#0d1216"/><circle cx="13.200" cy="2" r="1.500" fill="#0d1216"/></svg>
  </div>
</div>
<div id="outer-r"><i></i></div>
<div id="outer-b"></div>
</body>
</html>
